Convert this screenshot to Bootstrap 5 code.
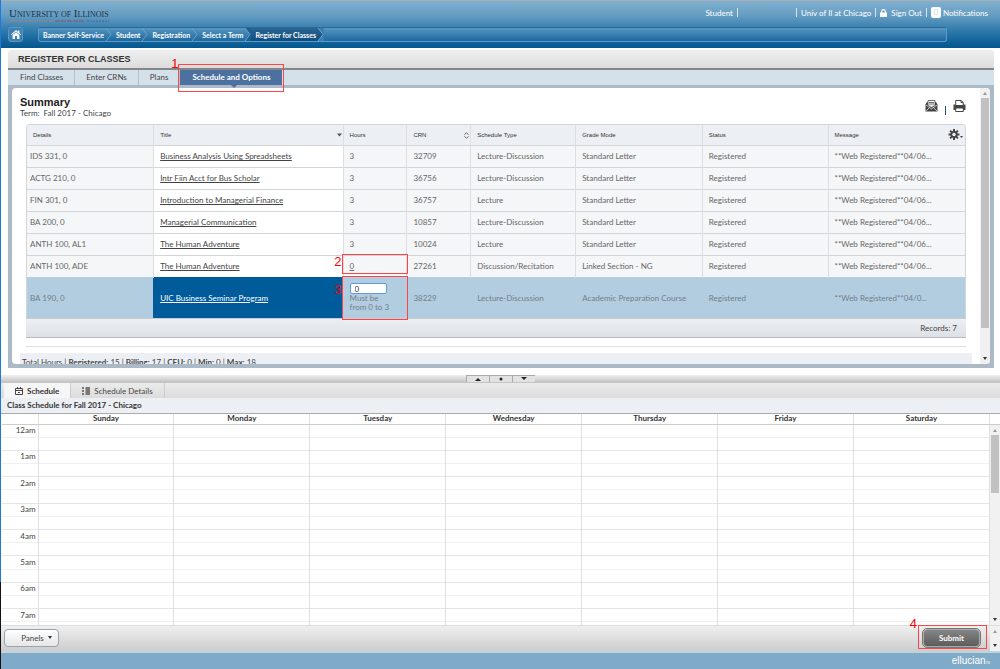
<!DOCTYPE html>
<html lang="en">
<head>
<meta charset="utf-8">
<meta name="viewport" content="width=device-width, initial-scale=1">
<title>Register for Classes</title>
<link href="https://cdn.jsdelivr.net/npm/bootstrap@5.3.0/dist/css/bootstrap.min.css" rel="stylesheet">
<style>
html{background:linear-gradient(#2277dd 87%,#111 87%)}
body{font:8px/10px Lato,"Liberation Sans",sans-serif;color:#444;background:#fff;height:100vh;overflow:hidden;margin-left:1px}
body a{color:inherit}
button{font:inherit;color:inherit}
svg{flex:none}

/* site header */
.top-bar{background:linear-gradient(#80b0cf,#669dc2 30%,#2c78aa 65%,#03568f);border-top:1px solid #a9b0b3;color:#fff;height:48px}
.top-row{height:23px}
.brand{font:11px/11px "Liberation Serif",serif;color:#1f3242;white-space:nowrap}
.brand span{font-size:8px}
.brand-line{display:block;height:2px;width:102px;opacity:.75}
.user-links{gap:4px;padding-right:12px}
.user-links .bar{width:1px;height:9px;background:#d5e4ef}
.user-gap{width:50px}
.count{width:10px;height:11px;line-height:11px;border-radius:2px;background:#fff;color:#c5d5e0;text-align:center;margin-right:2px}
.nav-row{padding:3px 53px 0 7px}
.home{width:15px;height:15px;border:1px solid #5c98c2;border-radius:3px;background:#3a80b1;margin-right:15px}
.crumbs{height:15px;border:1px solid #5d99c3;border-top-color:#2a6a99;border-radius:3px;background:linear-gradient(#5896bf,#1c69a1);font-size:7px;font-weight:bold;list-style:none;overflow:hidden}
.crumbs li{padding-left:4px;display:flex;align-items:center;gap:1px}
.crumbs a{text-decoration:none}
.crumbs .here{background:linear-gradient(#2b6590,#0e4f80)}

/* registration panel */
.reg{margin:2px 6px 0 7px}
.reg-title{font:bold 9px/18px "Liberation Sans",sans-serif;color:#333;background:linear-gradient(#efefef,#dcdcdc);border-bottom:2px solid #84878a;padding:0 0 0 10px;border-radius:3px 3px 0 0;margin:0}
.reg-tabs{background:#d5e1ea;height:15px}
.reg-tabs a{line-height:14px;padding:0 11px;text-decoration:none;border-right:1px solid #b4c0ca}
.reg-tabs a:first-child{padding-left:12px}
.reg-tabs a.on{background:#4d719f;color:#fff;font-weight:bold;border:0;padding:0 12px;position:relative}
.reg-tabs a.on::after{content:"";position:absolute;left:50%;top:100%;border:3px solid transparent;border-top-color:#4d719f}
.reg-body{background:#acbac8;padding:3px 4px 4px}
.pane{background:#fff;border-radius:4px;height:276px;overflow:hidden}
.sum{padding:8px 14px 0;min-width:0}
.sum h1{font:bold 11px/12px "Liberation Sans",sans-serif;color:#222;margin:0}
.sum-head{margin-left:-6px}
.regs-box{border:1px solid #d2d6da;border-width:1px 1px 0;border-radius:4px 4px 0 0;margin-top:6px}
.regs{table-layout:fixed;width:100%;border-collapse:collapse}
.regs th{font:6px/8px "Liberation Sans",sans-serif;background:#eceff4;height:20px;color:#333}
.regs td{background:#f4f6f8;height:22px;color:#666;border-top:1px solid #d2d6da}
.regs th,.regs td{padding:0 6px;border-left:1px solid #dcdfe2;white-space:nowrap;position:relative}
.regs td:first-child{padding-left:3px}
.regs th:first-child,.regs td:first-child{border-left:0}
.regs th:first-child{border-top-left-radius:3px}
.regs th:last-child{border-top-right-radius:3px}
.regs td:nth-child(2){background:#fff;color:#444}
.regs tr.sel td{height:41px;background:#b1cddf;border-color:#b1cddf;color:#71808c}
.regs tr.sel td:nth-child(2){background:#005b9a;color:#fff;border-color:#005b9a}
.sort{position:absolute;right:1px;top:7px}
.gear{position:absolute;right:2px;top:3px;border:0;background:none;padding:0;line-height:0}
.hours-in{display:block;width:37px;height:11px;border:1px solid #5b9be0;border-radius:2px;padding:0 4px;font-size:8px;line-height:9px;color:#333;outline:0}
.hint{line-height:9px;display:block}
.recs{height:20px;background:linear-gradient(#eceff3,#dde1e6);border-top:1px solid #c9ccd0;border-bottom:1px solid #b9bdc1;padding-right:9px}
.rule{border-top:1px solid #dcdee0;margin-top:8px}
.totals{background:#eceff4;padding:4px 2px;margin:6px -6px 0}
.tool{border:0;background:none;padding:0;line-height:0}
.tool-bar{width:1px;height:9px;background:#2b4a8c;margin:6px 7px 0}

/* annotations drawn over the page */
.note{position:absolute;border:1px solid #f44;color:#f00;font:13px/12px "Liberation Sans",sans-serif;pointer-events:none;z-index:2}
.note b{position:absolute;right:100%;margin-right:1px;font-weight:normal}
.note-tab{inset:-6px -2px -7px -2px}
.note-tab b{top:-7px}
.note-zero{inset:-2px -2px 3px -2px}
.note-zero b{top:1px}
.note-input{inset:-2px -2px -2px -2px}
.note-input b{top:7px}
.note-submit{inset:-4px -7px -2px -5px}
.note-submit b{top:-8px;margin-right:2px}

/* scroll bars */
.sb{width:10px;background:#f1f1f1;display:flex;flex-direction:column;align-items:center;flex:none;padding:4px 0;gap:3px}
.thumb{width:8px;background:#c1c1c1}
.track{flex:1}
.up,.dn{border:2px solid transparent;width:0;height:0;flex:none}
.up{border-bottom:3px solid #999;border-top:0}
.dn{border-top:3px solid #333;border-bottom:0}

/* schedule */
.split{height:8px;margin-top:7px;background:linear-gradient(#f0f0f0,#c4c4c4);border-bottom:1px solid #c4c4c4}
.split button{width:23px;height:7px;padding:0;border:0;border-left:1px solid #aaa;border-top:1px solid #aaa;background:#e2e2e2;display:flex;align-items:center;justify-content:center}
.s-tabs{background:linear-gradient(#ebebeb,#dcdcdc);height:15px}
.s-tabs a{text-decoration:none;padding:0 11px;gap:4px;border-right:1px solid #ccc}
.s-tabs a.on{background:#f6f6f6;font-weight:bold;color:#333;margin-left:3px}
.s-title{background:#eceff4;font:bold 8px/15px Lato,"Liberation Sans",sans-serif;color:#333;margin:0;padding-left:6px;border-bottom:1px solid #aaa}
.cal-box{min-height:0;padding-left:1px}
.cal-main{min-width:0}
.cal{table-layout:fixed;border-collapse:collapse;width:100%;height:100%}
.cal col:first-child{width:36px}
.cal th,.cal td{border-left:1px solid #dfdfdf;border-top:1px solid #e6e6e6;padding:0;line-height:9px}
.cal thead>tr>*{height:10px;text-align:center;color:#333;border-top:0;border-bottom:1px solid #ccc}
.cal tbody th{text-align:right;font-weight:normal;padding-right:2px}
.cal tbody tr{height:13px}
.cal tbody tr:nth-child(even)>*{border-top-color:#f0f0f0}
.cal tbody tr.rest{height:3px}
.cal tr>*:first-child{border-left:0}
.cal tr>*:last-child{border-right:1px solid #dfdfdf}
.cal-top{height:11px;border-bottom:1px solid #ccc}

/* bottom bars */
.actions{height:26px;background:linear-gradient(#efefef,#cdcdcd);border-top:1px solid #ddd}
.panels{width:55px;height:18px;border:1px solid #93a5b1;border-radius:4px;background:linear-gradient(#fff,#e6e6e6);padding:0 0 0 10px;margin:0 0 2px 3px}
.submit{width:57px;height:18px;border:1px solid #aaa;border-radius:4px;background:linear-gradient(#858585,#5d5d5d);color:#fff;font-weight:bold;padding:0;outline:1px solid #777}
.submit-box{margin:0 10px 2px 0}
.foot{height:18px;background:#7faac8;border-top:2px solid #bfd2de;color:#fff;font:10px/16px "Liberation Sans",sans-serif;padding-right:10px}
.foot sub{font-size:3px;bottom:0}
</style>
</head>
<body class="d-flex flex-column">
<header class="top-bar flex-shrink-0 d-flex flex-column">
 <div class="top-row d-flex align-items-center justify-content-between">
  <div class="ps-2 pt-1"><div class="brand">U<span>NIVERSITY OF</span> I<span>LLINOIS</span></div>
   <svg class="brand-line" viewBox="0 0 102 2"><path d="M0 1H46" stroke="#b5805f" stroke-dasharray="4 1"/><path d="M46 1H76" stroke="#a33d4f" stroke-dasharray="5 1"/><path d="M78 1H100" stroke="#3c5c8c" stroke-dasharray="2 1"/></svg></div>
  <div class="user-links d-flex align-items-center">
   <span>Student</span><i class="bar"></i><span class="user-gap"></span><i class="bar"></i><span>Univ of Il at Chicago</span><i class="bar"></i>
   <a href="#" class="d-flex align-items-center text-decoration-none"><svg class="me-1" width="7" height="8" viewBox="0 0 7 8"><path d="M0 3.500h7V8H0z" fill="#fff"/><path d="M1.700 4V2.400a1.800 1.800 0 013.600 0V4" fill="none" stroke="#fff" stroke-width="1.100"/></svg>Sign Out</a><i class="bar"></i>
   <a href="#" class="d-flex align-items-center text-decoration-none"><span class="count">0</span>Notifications</a>
  </div>
 </div>
 <nav class="nav-row d-flex" aria-label="breadcrumb">
  <a class="home d-flex align-items-center justify-content-center" href="#" aria-label="Home"><svg width="10" height="9" viewBox="0 0 10 9" fill="#fff"><path d="M5 0L0 4.400l.7.7L5 1.500l4.300 3.600.7-.7L8.500 3V.6H7v1.100z"/><path d="M5 2.300L1.600 5.100V9H4V6h2v3h2.400V5.100z"/></svg></a>
  <ol class="crumbs d-flex m-0 p-0 flex-grow-1">
   <li><a href="#">Banner Self-Service</a><svg width="7" height="13"><path d="M1 0l5 6.500-5 6.500" fill="none" stroke="#6ba1c7"/></svg></li>
   <li><a href="#">Student</a><svg width="7" height="13"><path d="M1 0l5 6.500-5 6.500" fill="none" stroke="#6ba1c7"/></svg></li>
   <li><a href="#">Registration</a><svg width="7" height="13"><path d="M1 0l5 6.500-5 6.500" fill="none" stroke="#6ba1c7"/></svg></li>
   <li><a href="#">Select a Term</a><svg width="7" height="13"><path d="M1 0h6v13H1l5-6.500z" fill="#1f5f8f"/><path d="M1 0l5 6.500-5 6.500" fill="none" stroke="#6ba1c7"/></svg></li>
   <li class="here"><a href="#">Register for Classes</a><svg width="7" height="13"><path d="M1 0h6v13H1l5-6.500z" fill="#3a7dae"/><path d="M1 0l5 6.500-5 6.500" fill="none" stroke="#6ba1c7"/></svg></li>
  </ol>
 </nav>
</header>

<main class="reg flex-shrink-0">
 <h2 class="reg-title">REGISTER FOR CLASSES</h2>
 <nav class="reg-tabs d-flex"><a href="#">Find Classes</a><a href="#">Enter CRNs</a><a href="#">Plans</a><a href="#" class="on">Schedule and Options<span class="note note-tab"><b>1</b></span></a></nav>
 <div class="reg-body">
  <div class="pane d-flex">
   <div class="sum flex-grow-1">
    <div class="sum-head d-flex justify-content-between">
     <div><h1>Summary</h1><div>Term:&nbsp; Fall 2017 - Chicago</div></div>
     <div class="d-flex align-items-start pt-1">
      <button class="tool" aria-label="Email"><svg width="13" height="12" viewBox="0 0 13 12"><path d="M.5 4.500L2 2h9l1.500 2.500V11.500H.5z" fill="#444"/><path d="M3 .5h7v5L6.500 7.500 3 5.500z" fill="#eee" stroke="#555" stroke-width=".8"/><path d="M4 2.500h5M4 4h5" stroke="#555" stroke-width=".8"/><path d="M1 11l4-4M12 11L8 7M1 5l5.500 4L12 5" stroke="#ddd" stroke-width=".8" fill="none"/></svg></button>
      <span class="tool-bar"></span>
      <button class="tool" aria-label="Print"><svg width="13" height="12" viewBox="0 0 13 12"><path d="M.5 4.500h12V10h-12z" fill="#444"/><path d="M2.700 5.500V.5h5.500l2 2v3z" fill="#fff" stroke="#444"/><path d="M8 .5v2h2" fill="none" stroke="#444"/><path d="M2.700 8h7.600v3.500H2.700z" fill="#fff" stroke="#444"/></svg></button>
     </div>
    </div>
    <div class="regs-box">
    <table class="regs">
     <colgroup><col style="width:13.500%"><col style="width:20.200%"><col style="width:6.800%"><col style="width:6.800%"><col style="width:11.200%"><col style="width:13.500%"><col style="width:13.400%"><col></colgroup>
     <thead><tr><th>Details</th><th>Title<svg class="sort" width="5" height="6"><path d="M0 1.500h5L2.500 4.500z" fill="#555"/></svg></th><th>Hours</th><th>CRN<svg class="sort" width="5" height="7"><path d="M.5 2.700L2.500.7l2 2M.5 4.300l2 2 2-2" fill="none" stroke="#555" stroke-width=".9"/></svg></th><th>Schedule Type</th><th>Grade Mode</th><th>Status</th><th>Message<button class="gear" aria-label="Settings"><svg width="15" height="13" viewBox="0 0 15 13"><g stroke="#444" stroke-width="2"><path d="M6 1v11M.5 6.500h11M2.100 2.600l7.800 7.800M9.900 2.600l-7.800 7.800"/></g><circle cx="6" cy="6.500" r="3.600" fill="#444"/><circle cx="6" cy="6.500" r="1.700" fill="#eceff4"/><path d="M12 8h3l-1.500 2z" fill="#444"/></svg></button></th></tr></thead>
     <tbody>
      <tr><td>IDS 331, 0</td><td><a href="#">Business Analysis Using Spreadsheets</a></td><td>3</td><td>32709</td><td>Lecture-Discussion</td><td>Standard Letter</td><td>Registered</td><td>**Web Registered**04/06...</td></tr>
      <tr><td>ACTG 210, 0</td><td><a href="#">Intr Fiin Acct for Bus Scholar</a></td><td>3</td><td>36756</td><td>Lecture-Discussion</td><td>Standard Letter</td><td>Registered</td><td>**Web Registered**04/06...</td></tr>
      <tr><td>FIN 301, 0</td><td><a href="#">Introduction to Managerial Finance</a></td><td>3</td><td>36757</td><td>Lecture</td><td>Standard Letter</td><td>Registered</td><td>**Web Registered**04/06...</td></tr>
      <tr><td>BA 200, 0</td><td><a href="#">Managerial Communication</a></td><td>3</td><td>10857</td><td>Lecture-Discussion</td><td>Standard Letter</td><td>Registered</td><td>**Web Registered**04/06...</td></tr>
      <tr><td>ANTH 100, AL1</td><td><a href="#">The Human Adventure</a></td><td>3</td><td>10024</td><td>Lecture</td><td>Standard Letter</td><td>Registered</td><td>**Web Registered**04/06...</td></tr>
      <tr><td>ANTH 100, ADE</td><td><a href="#">The Human Adventure</a></td><td><a href="#">0</a><span class="note note-zero"><b>2</b></span></td><td>27261</td><td>Discussion/Recitation</td><td>Linked Section - NG</td><td>Registered</td><td>**Web Registered**04/06...</td></tr>
      <tr class="sel"><td>BA 190, 0</td><td><a href="#">UIC Business Seminar Program</a></td><td><input class="hours-in" id="hours" value="0" aria-label="Hours"><label class="hint" for="hours">Must be<br>from 0 to 3</label><span class="note note-input"><b>3</b></span></td><td>38229</td><td>Lecture-Discussion</td><td>Academic Preparation Course</td><td>Registered</td><td>**Web Registered**04/0...</td></tr>
     </tbody>
    </table>
    </div>
    <div class="recs d-flex align-items-center justify-content-end">Records: 7</div>
    <div class="rule"></div>
    <div class="totals">Total Hours | <b>Registered:</b> 15 | <b>Billing:</b> 17 | <b>CEU:</b> 0 | <b>Min:</b> 0 | <b>Max:</b> 18</div>
   </div>
   <div class="sb"><i class="up"></i><i class="thumb" style="height:86%"></i><i class="track"></i><i class="dn"></i></div>
  </div>
 </div>
</main>

<div class="split flex-shrink-0 d-flex justify-content-center">
 <button aria-label="Collapse up"><svg width="6" height="4"><path d="M0 4h6L3 1z" fill="#222"/></svg></button><button aria-label="Center"><svg width="4" height="4"><circle cx="2" cy="2" r="1.500" fill="#222"/></svg></button><button aria-label="Collapse down"><svg width="6" height="4"><path d="M0 0h6L3 3z" fill="#222"/></svg></button>
</div>
<section class="d-flex flex-column flex-grow-1" style="min-height:0">
 <nav class="s-tabs d-flex flex-shrink-0"><a href="#" class="on d-flex align-items-center"><svg width="8" height="8"><path d="M.5 1.500h7v6h-7zM.5 3.500h7M2.500 0v2M5.500 0v2" fill="none" stroke="#444"/><path d="M3 5h2v1H3z" fill="#444"/></svg>Schedule</a><a href="#" class="d-flex align-items-center"><svg width="8" height="8"><path d="M0 1h2M0 4h2M0 7h2M3.500 1H8M3.500 3H8M3.500 5H8M3.500 7H8" stroke="#555" stroke-width="1.400"/></svg>Schedule Details</a></nav>
 <h2 class="s-title flex-shrink-0">Class Schedule for Fall 2017 - Chicago</h2>
 <div class="cal-box d-flex flex-grow-1 overflow-hidden">
  <div class="cal-main flex-grow-1">
  <table class="cal">
   <colgroup><col><col span="7"></colgroup>
   <thead><tr><td></td><th>Sunday</th><th>Monday</th><th>Tuesday</th><th>Wednesday</th><th>Thursday</th><th>Friday</th><th>Saturday</th></tr></thead>
   <tbody id="slots"></tbody>
  </table>
  </div>
  <div class="d-flex flex-column"><div class="cal-top"></div><div class="sb flex-grow-1"><i class="up"></i><i class="thumb" style="height:30%"></i><i class="track"></i><i class="dn"></i></div></div>
 </div>
</section>
<div class="actions flex-shrink-0 d-flex align-items-center">
 <button class="panels d-flex align-items-center justify-content-center">Panels<i class="dn ms-1"></i></button>
 <div class="submit-box position-relative ms-auto d-flex"><button class="submit">Submit</button><span class="note note-submit"><b>4</b></span></div>
 <div class="sb align-self-stretch"><i class="up"></i><i class="track"></i><i class="dn"></i></div>
</div>
<footer class="foot flex-shrink-0 text-end">ellucian<sub>TM</sub></footer>
<script src="https://cdn.jsdelivr.net/npm/bootstrap@5.3.0/dist/js/bootstrap.bundle.min.js"></script>
<script>
// Two half-hour rows per hour; the last hour is cut by the scroll area.
const days = "<td></td>".repeat(7);
let rows = "";
for (let i = 0; i < 15; i++) {
  const hour = (i / 2) || 12;
  rows += `<tr><th scope="row">${i % 2 ? "" : hour + "am"}</th>${days}</tr>`;
}
document.getElementById("slots").innerHTML = rows + `<tr class="rest"><td></td>${days}</tr>`;
</script>
</body>
</html>
